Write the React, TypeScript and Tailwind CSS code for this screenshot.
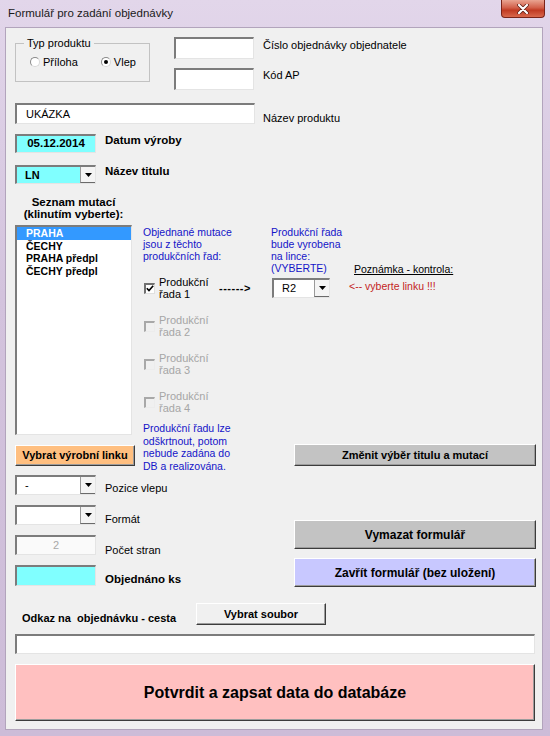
import React from 'react';

const sunken =
  'border-t-2 border-l-2 border-r border-b border-t-[#7c7c7c] border-l-[#7c7c7c] border-r-[#e4e4e4] border-b-[#e4e4e4]';
const raised =
  'border border-t-white border-l-white border-r-[#3c3c3c] border-b-[#3c3c3c] shadow-[inset_-1px_-1px_0_#9c9c9c]';

function Tri() {
  return (
    <svg width="7" height="4" viewBox="0 0 7 4">
      <path d="M0 0h7L3.5 4z" fill="#000" />
    </svg>
  );
}

function Combo({ value, className = '', bold = false }: { value?: string; className?: string; bold?: boolean }) {
  return (
    <div className={`flex ${sunken} ${className}`}>
      <div className={`flex-1 flex items-center pl-[8px] text-[11px] ${bold ? 'font-bold' : ''}`}>{value}</div>
      <div className="w-[15px] flex items-center justify-center bg-[#f4f4f4] border-l border-l-[#9a9a9a] border-b border-b-[#6a6a6a]">
        <Tri />
      </div>
    </div>
  );
}

function Check({ checked = false, disabled = false }: { checked?: boolean; disabled?: boolean }) {
  return (
    <span
      className={`w-[11px] h-[11px] flex items-center justify-center shrink-0 border-t-2 border-l-2 border-r border-b ${
        disabled
          ? 'bg-[#f0f0f0] border-t-[#a8a8a8] border-l-[#a8a8a8] border-r-[#ececec] border-b-[#ececec]'
          : 'bg-white border-t-[#707070] border-l-[#707070] border-r-[#e0e0e0] border-b-[#e0e0e0]'
      }`}
    >
      {checked && (
        <svg width="8" height="7" viewBox="0 0 8 7">
          <path d="M0.8 3.2 L3 5.6 L7.2 0.8" stroke="#000" strokeWidth="1.6" fill="none" />
        </svg>
      )}
    </span>
  );
}

function Radio({ on = false }: { on?: boolean }) {
  return (
    <span className="w-[10px] h-[10px] rounded-full bg-white border border-t-[#8a8a8a] border-l-[#8a8a8a] border-r-[#d8d8d8] border-b-[#d8d8d8] flex items-center justify-center">
      {on && <span className="w-[4px] h-[4px] rounded-full bg-black" />}
    </span>
  );
}

function LineCheck({ n, checked, disabled }: { n: number; checked?: boolean; disabled?: boolean }) {
  return (
    <div className="flex items-center h-[24px] pl-[1px]">
      <Check checked={checked} disabled={disabled} />
      <div className={`ml-[4px] w-[60px] text-[11px] leading-[12px] ${disabled ? 'text-[#a6a6a6]' : 'text-black'}`}>
        Produkční
        <br />
        řada {n}
      </div>
      {checked && <div className="text-[11px] font-bold tracking-[0.5px] leading-none">------&gt;</div>}
    </div>
  );
}

export default function App() {
  return (
    <div className="w-[550px] h-[736px] bg-[linear-gradient(180deg,#e2d6ea_0%,#d3c3dd_40%,#cdbcd8_100%)] flex flex-col font-['Liberation_Sans',Arial,sans-serif] text-black">
      {/* title bar */}
      <div className="h-[27px] flex items-start justify-between shrink-0">
        <div className="pl-[8px] pt-[6px] text-[11.5px] leading-[14px] text-[#1a1a1a]">Formulář pro zadání objednávky</div>
        <div className="mr-[5px] w-[44px] h-[18px] rounded-b-[4px] border border-t-0 border-[#7a2418] bg-[linear-gradient(180deg,#e9a491_0%,#d2604a_45%,#c03a22_60%,#d9684c_100%)] flex items-center justify-center">
          <svg width="12" height="10" viewBox="0 0 12 10">
            <path d="M2 1 L10 9 M10 1 L2 9" stroke="#5a1a10" strokeWidth="3.6" strokeLinecap="round" />
            <path d="M2 1 L10 9 M10 1 L2 9" stroke="#fff" strokeWidth="2.2" strokeLinecap="round" />
          </svg>
        </div>
      </div>

      {/* client area */}
      <div className="ml-[5px] w-[538px] h-[703px] bg-[#f0f0f0] border border-[#b2a4bc] flex flex-col pl-[9px] pt-[9px]">
        {/* row A */}
        <div className="flex h-[54px]">
          <fieldset className="w-[135px] h-[45px] border border-[#c2c2c2]">
            <legend className="ml-[8px] px-[3px] text-[11px] leading-[12px]">Typ produktu</legend>
            <div className="flex items-center mt-[7px] pl-[14px] text-[11px] leading-[12px]">
              <Radio />
              <span className="ml-[3px]">Příloha</span>
              <span className="ml-[23px]">
                <Radio on />
              </span>
              <span className="ml-[3px]">Vlep</span>
            </div>
          </fieldset>
          <div className="ml-[24px] flex flex-col">
            <div className="flex items-start">
              <div className={`w-[80px] h-[22px] bg-white ${sunken}`} />
              <div className="ml-[9px] mt-[2px] text-[11px] leading-[12px]">Číslo objednávky objednatele</div>
            </div>
            <div className="flex items-start mt-[9px]">
              <div className={`w-[80px] h-[22px] bg-white ${sunken}`} />
              <div className="ml-[9px] mt-[1px] text-[11px] leading-[12px]">Kód AP</div>
            </div>
          </div>
        </div>

        {/* row B */}
        <div className="flex items-end mt-[12px]">
          <div className={`w-[240px] h-[21px] bg-white ${sunken} flex items-center pl-[9px] text-[11px]`}>UKÁZKA</div>
          <div className="ml-[8px] text-[11px] leading-[12px]">Název produktu</div>
        </div>

        {/* row C */}
        <div className="flex items-start mt-[10px]">
          <div className={`w-[81px] h-[19px] bg-[#80ffff] ${sunken} flex items-center justify-center text-[11.5px] font-bold`}>05.12.2014</div>
          <div className="ml-[9px] text-[11.5px] font-bold leading-[12px]">Datum výroby</div>
        </div>

        {/* row D */}
        <div className="flex items-start mt-[12px]">
          <Combo value="LN" bold className="w-[81px] h-[19px] bg-[#80ffff]" />
          <div className="ml-[9px] text-[11.5px] font-bold leading-[12px]">Název titulu</div>
        </div>

        {/* row E */}
        <div className="w-[117px] mt-[12px] text-center text-[11.5px] font-bold leading-[12px]">
          Seznam mutací
          <br />
          (klinutím vyberte):
        </div>

        {/* main */}
        <div className="flex h-[250px] mt-[5px]">
          <div className="w-[120px] flex flex-col shrink-0">
            <div className={`w-[117px] h-[210px] bg-white ${sunken} text-[10.5px] font-bold leading-[12.7px]`}>
              <div className="bg-[#3399ff] text-white pl-[9px]">PRAHA</div>
              <div className="pl-[9px]">ČECHY</div>
              <div className="pl-[9px]">PRAHA předpl</div>
              <div className="pl-[9px]">ČECHY předpl</div>
            </div>
            <div className={`mt-[10px] w-[120px] h-[21px] bg-[#ffbf80] ${raised} flex items-center justify-center text-[11px] font-bold`}>
              Vybrat výrobní linku
            </div>
          </div>

          <div className="ml-[8px] w-[128px] shrink-0 flex flex-col pt-[1px]">
            <div className="text-[10.5px] leading-[12px] text-[#1414c8]">
              Objednané mutace
              <br />
              jsou z těchto
              <br />
              produkčních řad:
            </div>
            <div className="mt-[14px]">
              <LineCheck n={1} checked />
            </div>
            <div className="mt-[14px]">
              <LineCheck n={2} disabled />
            </div>
            <div className="mt-[14px]">
              <LineCheck n={3} disabled />
            </div>
            <div className="mt-[14px]">
              <LineCheck n={4} disabled />
            </div>
            <div className="mt-[8px] text-[10.5px] leading-[12.5px] text-[#1414c8]">
              Produkční řadu lze
              <br />
              odškrtnout, potom
              <br />
              nebude zadána do
              <br />
              DB a realizována.
            </div>
          </div>

          <div className="flex flex-col">
            <div className="flex">
              <div className="w-[78px] shrink-0 flex flex-col pt-[1px]">
                <div className="text-[10.5px] leading-[12px] text-[#1414c8]">
                  Produkční řada
                  <br />
                  bude vyrobena
                  <br />
                  na lince:
                  <br />
                  (VYBERTE)
                </div>
                <Combo value="R2" className="mt-[4px] ml-[1px] w-[58px] h-[20px] bg-white" />
              </div>
              <div className="flex flex-col pt-[38px]">
                <div className="ml-[5px] text-[10.5px] leading-[12px] underline">Poznámka - kontrola:</div>
                <div className="mt-[5px] text-[10.5px] leading-[12px] text-[#c41e1e]">&lt;-- vyberte linku !!!</div>
              </div>
            </div>
            <div className={`ml-[23px] mt-[146px] w-[242px] h-[22px] bg-[#c3c3c3] ${raised} flex items-center justify-center text-[11px] font-bold`}>
              Změnit výběr titulu a mutací
            </div>
          </div>
        </div>

        {/* lower section */}
        <div className="flex">
          <div className="w-[279px] shrink-0 flex flex-col">
            <div className="flex items-end">
              <Combo value="-" className="w-[81px] h-[20px] bg-white" />
              <div className="ml-[9px] mb-[1px] text-[11px] leading-[12px]">Pozice vlepu</div>
            </div>
            <div className="flex items-end mt-[10px]">
              <Combo className="w-[81px] h-[20px] bg-white" />
              <div className="ml-[9px] text-[11px] leading-[12px]">Formát</div>
            </div>
            <div className="flex items-end mt-[10px]">
              <div className={`w-[81px] h-[20px] bg-[#fafafa] ${sunken} flex items-center justify-center text-[11px] text-[#a8a8a8]`}>2</div>
              <div className="ml-[9px] -mb-[1px] text-[11px] leading-[12px]">Počet stran</div>
            </div>
            <div className="flex items-end mt-[10px]">
              <div className={`w-[81px] h-[21px] bg-[#80ffff] ${sunken}`} />
              <div className="ml-[9px] mb-[1px] text-[11.5px] font-bold leading-[12px]">Objednáno ks</div>
            </div>
          </div>
          <div className="w-[242px] flex flex-col pt-[45px]">
            <div className={`h-[29px] bg-[#c3c3c3] ${raised} flex items-center justify-center text-[12px] font-bold`}>Vymazat formulář</div>
            <div className={`mt-[9px] h-[29px] bg-[#c8c8ff] ${raised} flex items-center justify-center text-[12px] font-bold`}>
              Zavřít formulář (bez uložení)
            </div>
          </div>
        </div>

        {/* odkaz */}
        <div className="flex items-end mt-[16px]">
          <div className="ml-[7px] w-[174px] mb-[1px] text-[11px] font-bold leading-[12px] whitespace-pre">Odkaz na  objednávku - cesta</div>
          <div className={`w-[130px] h-[22px] bg-[#f0f0f0] ${raised} flex items-center justify-center text-[11px] font-bold`}>Vybrat soubor</div>
        </div>
        <div className={`mt-[9px] w-[520px] h-[20px] bg-white ${sunken}`} />
        <div className={`mt-[10px] w-[520px] h-[57px] bg-[#ffc0c0] ${raised} flex items-center justify-center text-[16px] font-bold`}>
          Potvrdit a zapsat data do databáze
        </div>
      </div>
    </div>
  );
}
